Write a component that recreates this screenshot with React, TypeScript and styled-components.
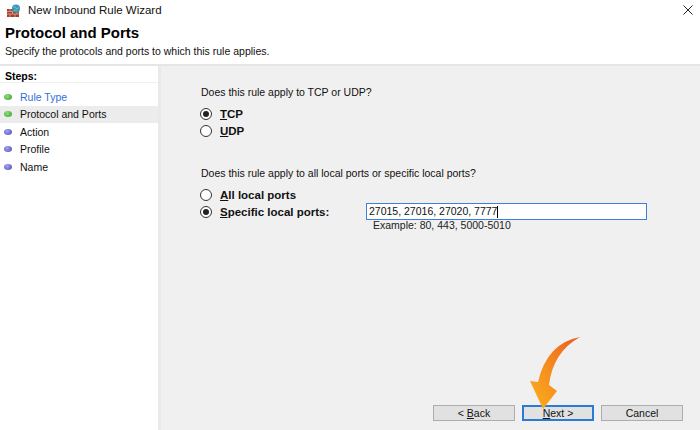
import React from "react";
import styled, { createGlobalStyle } from "styled-components";

const Global = createGlobalStyle`
  html, body { margin: 0; padding: 0; background: #ffffff; }
  body { font-family: "Liberation Sans", Arial, sans-serif; font-size: 10.5px; color: #000; }
  * { box-sizing: border-box; }
`;

const Window = styled.div`
  position: relative;
  width: 700px;
  height: 430px;
  display: flex;
  flex-direction: column;
  background: #ffffff;
  overflow: hidden;
`;

const TitleBar = styled.div`
  height: 20px;
  display: flex;
  align-items: center;
  padding-left: 7px;
  gap: 7px;
  font-size: 11.5px;
`;

const TitleText = styled.span`
  flex: 1;
  color: #111;
`;

const CloseBtn = styled.div`
  width: 24px;
  display: flex;
  justify-content: center;
`;

const Header = styled.div`
  height: 46px;
  padding: 3px 5px 0;
  display: flex;
  flex-direction: column;
  border-bottom: 2px solid #e6e6e6;
`;

const HeaderTitle = styled.div`
  font-weight: bold;
  font-size: 15px;
  line-height: 19px;
`;

const HeaderSub = styled.div`
  font-size: 10.5px;
  line-height: 16px;
  margin-top: 1px;
  color: #111;
`;

const Body = styled.div`
  flex: 1;
  display: flex;
  min-height: 0;
`;

const Sidebar = styled.div`
  width: 161px;
  background: #ffffff;
  border-right: 3px solid #e9e9e9;
  display: flex;
  flex-direction: column;
  padding-top: 3px;
`;

const StepsHeader = styled.div`
  font-weight: bold;
  height: 14px;
  line-height: 14px;
  padding-left: 5px;
  border-bottom: 1px solid #f0f0f0;
  margin-bottom: 5px;
`;

const StepRow = styled.div<{ $active?: boolean; $link?: boolean }>`
  height: 17.5px;
  display: flex;
  align-items: center;
  padding-left: 4px;
  gap: 8px;
  background: ${(p) => (p.$active ? "#ececec" : "transparent")};
  color: ${(p) => (p.$link ? "#2f6fd6" : "#111")};
`;

const Dot = styled.span<{ $green?: boolean }>`
  width: 8px;
  height: 6px;
  border-radius: 50%;
  background: ${(p) =>
    p.$green
      ? "radial-gradient(circle at 40% 35%, #8fe07a, #2f9c24)"
      : "radial-gradient(circle at 40% 35%, #a8a4f0, #4a44b8)"};
`;

const Main = styled.div`
  flex: 1;
  background: #f0f0f0;
  display: flex;
  flex-direction: column;
  padding-left: 37px;
`;

const Question = styled.div<{ $top: number }>`
  margin-top: ${(p) => p.$top}px;
  line-height: 14px;
  padding-left: 3px;
  color: #111;
`;

const RadioRow = styled.label`
  display: flex;
  align-items: center;
  height: 17px;
  gap: 8px;
  padding-left: 2px;
  font-weight: bold;
  font-size: 11.5px;
  color: #111;
`;

const RadioCircle = styled.span<{ $checked?: boolean }>`
  width: 12px;
  height: 12px;
  border-radius: 50%;
  border: 1px solid #333;
  background: #fff;
  display: flex;
  align-items: center;
  justify-content: center;
  &::after {
    content: "";
    width: 6px;
    height: 6px;
    border-radius: 50%;
    background: ${(p) => (p.$checked ? "#222" : "transparent")};
  }
`;

const RadioGroup = styled.div<{ $top: number }>`
  margin-top: ${(p) => p.$top}px;
  display: flex;
  flex-direction: column;
`;

const PortsLine = styled.div`
  display: flex;
  align-items: flex-start;
`;

const PortsLabelCol = styled.div`
  width: 168px;
`;

const PortsInputCol = styled.div`
  display: flex;
  flex-direction: column;
`;

const PortInput = styled.div`
  width: 281px;
  height: 17px;
  border: 1px solid #3b82d6;
  background: #fff;
  padding: 0 2px;
  line-height: 15px;
  color: #111;
  display: flex;
  align-items: center;
`;

const Caret = styled.span`
  width: 1px;
  height: 12px;
  background: #000;
`;

const Example = styled.div`
  padding-left: 7px;
  line-height: 11px;
  color: #222;
`;

const ButtonRow = styled.div`
  margin-top: auto;
  display: flex;
  justify-content: flex-end;
  gap: 7px;
  padding-right: 17px;
  padding-bottom: 9px;
`;

const Button = styled.div<{ $w: number; $primary?: boolean }>`
  width: ${(p) => p.$w}px;
  height: 16px;
  display: flex;
  align-items: center;
  justify-content: center;
  background: #e1e1e1;
  border: ${(p) => (p.$primary ? "2px solid #2b7bd6" : "1px solid #adadad")};
  color: #111;
`;

const U = styled.span`
  text-decoration: underline;
`;

const ArrowSvg = styled.svg`
  position: absolute;
  left: 520px;
  top: 330px;
`;

const FirewallIcon = () => (
  <svg width="14" height="13" viewBox="0 0 14 13">
    <rect x="0" y="5" width="12" height="8" fill="#a0412d" />
    <path d="M0 7.5h12M0 10h12M3 5v2.5M8 5v2.5M5.5 7.5v2.5M10 7.5v2.5M3 10v3M8 10v3" stroke="#e7b7a5" strokeWidth="0.7" />
    <circle cx="9" cy="4.5" r="4" fill="#3b8fd8" />
    <path d="M6.5 3.5c1-1 2-0.5 2.5 0.5s1.8 0.8 2.6-0.5M7 6c1 .5 2 0 3 .5" stroke="#6fcf5a" strokeWidth="1.2" fill="none" />
  </svg>
);

export default function App() {
  return (
    <Window>
      <Global />
      <TitleBar>
        <FirewallIcon />
        <TitleText>New Inbound Rule Wizard</TitleText>
        <CloseBtn>
          <svg width="10" height="10" viewBox="0 0 10 10">
            <path d="M0.5 0.5L9.5 9.5M9.5 0.5L0.5 9.5" stroke="#222" strokeWidth="1" />
          </svg>
        </CloseBtn>
      </TitleBar>
      <Header>
        <HeaderTitle>Protocol and Ports</HeaderTitle>
        <HeaderSub>Specify the protocols and ports to which this rule applies.</HeaderSub>
      </Header>
      <Body>
        <Sidebar>
          <StepsHeader>Steps:</StepsHeader>
          <StepRow $link>
            <Dot $green />
            Rule Type
          </StepRow>
          <StepRow $active>
            <Dot $green />
            Protocol and Ports
          </StepRow>
          <StepRow>
            <Dot />
            Action
          </StepRow>
          <StepRow>
            <Dot />
            Profile
          </StepRow>
          <StepRow>
            <Dot />
            Name
          </StepRow>
        </Sidebar>
        <Main>
          <Question $top={19}>Does this rule apply to TCP or UDP?</Question>
          <RadioGroup $top={6}>
            <RadioRow>
              <RadioCircle $checked />
              <span><U>T</U>CP</span>
            </RadioRow>
            <RadioRow>
              <RadioCircle />
              <span><U>U</U>DP</span>
            </RadioRow>
          </RadioGroup>
          <Question $top={27}>Does this rule apply to all local ports or specific local ports?</Question>
          <RadioGroup $top={6}>
            <RadioRow>
              <RadioCircle />
              <span><U>A</U>ll local ports</span>
            </RadioRow>
            <PortsLine>
              <PortsLabelCol>
                <RadioRow>
                  <RadioCircle $checked />
                  <span><U>S</U>pecific local ports:</span>
                </RadioRow>
              </PortsLabelCol>
              <PortsInputCol>
                <PortInput>
                  27015, 27016, 27020, 7777
                  <Caret />
                </PortInput>
                <Example>Example: 80, 443, 5000-5010</Example>
              </PortsInputCol>
            </PortsLine>
          </RadioGroup>
          <ButtonRow>
            <Button $w={82}>
              &lt;&nbsp;<U>B</U>ack
            </Button>
            <Button $w={72} $primary>
              <U>N</U>ext &gt;
            </Button>
            <Button $w={82}>Cancel</Button>
          </ButtonRow>
        </Main>
      </Body>
      <ArrowSvg width="70" height="85" viewBox="0 0 70 85">
        <defs>
          <linearGradient id="arrowGrad" x1="1" y1="0" x2="0" y2="1">
            <stop offset="0" stopColor="#ee5a1e" />
            <stop offset="0.5" stopColor="#f58a1f" />
            <stop offset="1" stopColor="#fbb21b" />
          </linearGradient>
        </defs>
        <path
          d="M60 7 Q27 13 18 52 L10 51 L23 79 L37 61 L29 55 Q33 22 60 7 Z"
          fill="url(#arrowGrad)"
        />
      </ArrowSvg>
    </Window>
  );
}
